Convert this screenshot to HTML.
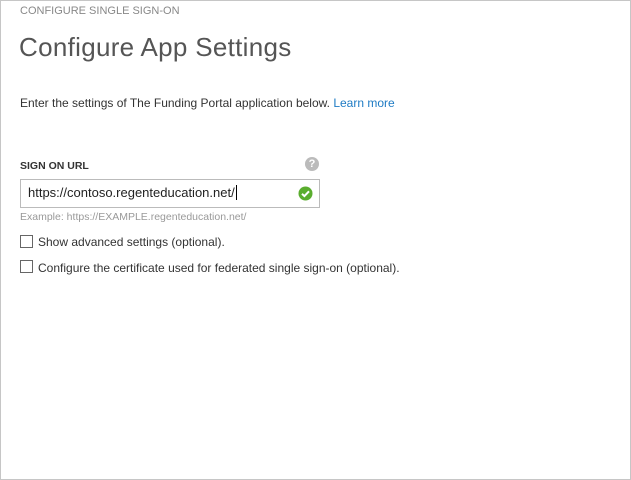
<!DOCTYPE html>
<html><head><style>
body{margin:0;width:631px;height:480px;overflow:hidden;background:#fff;font-family:"Liberation Sans",sans-serif;}
.frame{position:absolute;left:0;top:0;width:629px;height:478px;border:1px solid #c6c6c6;}
.a{position:absolute;white-space:nowrap;}
</style></head><body>
<div class="frame"></div>
<div class="a" style="left:20px;top:5px;font-size:11px;color:#888;">CONFIGURE SINGLE SIGN-ON</div>
<div class="a" style="left:19px;top:32px;font-size:26px;color:#555;font-weight:300;letter-spacing:0.3px;">Configure App Settings</div>
<div class="a" style="left:20px;top:96px;font-size:12px;color:#333;">Enter the settings of The Funding Portal application below. <span style="color:#1e7bc4">Learn more</span></div>
<div class="a" style="left:20px;top:160px;font-size:10.5px;color:#333;font-weight:bold;">SIGN ON URL</div>
<div class="a" style="left:305px;top:157px;width:14px;height:14px;border-radius:50%;background:#bbb;color:#fff;font-size:11px;font-weight:bold;text-align:center;line-height:14px;">?</div>
<div class="a" style="left:20px;top:179px;width:298px;height:27px;border:1px solid #bbb;"></div>
<div class="a" style="left:28px;top:185px;font-size:13px;color:#222;">https://contoso.regenteducation.net/<span style="border-left:1px solid #000;margin-left:1px;"></span></div>
<svg class="a" style="left:298px;top:186px" width="15" height="15" viewBox="0 0 15 15"><circle cx="7.5" cy="7.5" r="7" fill="#5aad2e"/><path d="M4 7.8l2.4 2.3 4.6-4.8" stroke="#fff" stroke-width="2" fill="none"/></svg>
<div class="a" style="left:20px;top:211px;font-size:10.5px;color:#999;">Example: https://EXAMPLE.regenteducation.net/</div>
<div class="a" style="left:20px;top:235px;width:11px;height:11px;border:1px solid #666;"></div>
<div class="a" style="left:38px;top:235px;font-size:12px;color:#333;">Show advanced settings (optional).</div>
<div class="a" style="left:20px;top:260px;width:11px;height:11px;border:1px solid #666;"></div>
<div class="a" style="left:38px;top:261px;font-size:12px;color:#333;">Configure the certificate used for federated single sign-on (optional).</div>
</body></html>
